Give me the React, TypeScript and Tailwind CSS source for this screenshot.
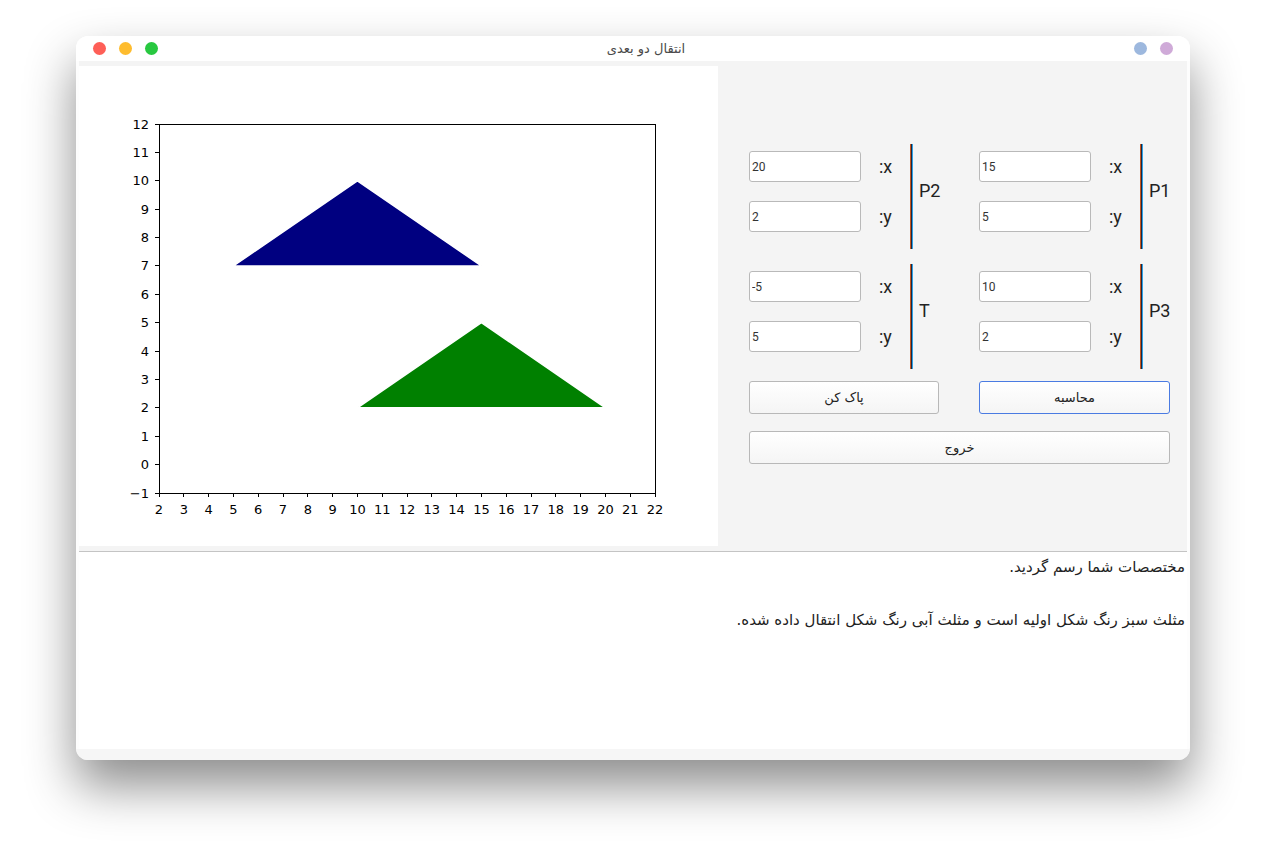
// Two-dimensional translation window (انتقال دو بعدی)
const FA = { fontFamily: '"DejaVu Sans", "Noto Sans", sans-serif' };
const RB = { fontFamily: 'Roboto, "Noto Sans", sans-serif' };

const px = (v: number) => 80 + (v - 2) * 24.8;
const py = (v: number) => 427 - (v + 1) * (369 / 13);

const xTicks = Array.from({ length: 21 }, (_, i) => i + 2);
const yTicks = Array.from({ length: 14 }, (_, i) => i - 1);

const tri = (pts: [number, number][]) => pts.map(([x, y]) => `${px(x)},${py(y)}`).join(' ');

const Chart = () => (
  <svg width="639" height="480" viewBox="0 0 639 480" className="block">
    <polygon points={tri([[5, 7], [10, 10], [15, 7]])} fill="#000080" stroke="#ffffff" strokeWidth="1.5" />
    <polygon points={tri([[10, 2], [15, 5], [20, 2]])} fill="#008000" stroke="#ffffff" strokeWidth="1.5" />
    <rect x="80" y="58" width="496" height="369" fill="none" stroke="#000" strokeWidth="1" shapeRendering="crispEdges" />
    {xTicks.map((v) => (
      <g key={`x${v}`}>
        <line x1={px(v)} x2={px(v)} y1="427" y2="431" stroke="#000" strokeWidth="1" shapeRendering="crispEdges" />
        <text x={px(v)} y="443" textAnchor="middle" dominantBaseline="central" fontSize="13" fill="#000" style={{ fontFamily: '"DejaVu Sans", sans-serif' }}>
          {v}
        </text>
      </g>
    ))}
    {yTicks.map((v) => (
      <g key={`y${v}`}>
        <line x1="76" x2="80" y1={py(v)} y2={py(v)} stroke="#000" strokeWidth="1" shapeRendering="crispEdges" />
        <text x="70" y={py(v)} textAnchor="end" dominantBaseline="central" fontSize="13" fill="#000" style={{ fontFamily: '"DejaVu Sans", sans-serif' }}>
          {v < 0 ? `\u2212${-v}` : v}
        </text>
      </g>
    ))}
  </svg>
);

const Field = ({ value }: { value: string }) => (
  <input
    readOnly
    defaultValue={value}
    style={RB}
    className="h-[31px] w-[112px] rounded-[3px] border border-[#b9b9b9] bg-white px-[2px] text-[12px] text-[#333] outline-none"
  />
);

const Point = ({ name, x, y }: { name: string; x: string; y: string }) => (
  <div className="flex h-[105px]" style={RB}>
    <div className="flex w-[112px] flex-col gap-[19px] pt-[7px]">
      <Field value={x} />
      <Field value={y} />
    </div>
    <div className="ml-[18px] flex w-[16px] flex-col gap-[19px] pt-[7px] text-[18px] text-[#222]">
      <div className="flex h-[31px] items-center">:x</div>
      <div className="flex h-[31px] items-center">:y</div>
    </div>
    <div className="ml-[15px] flex h-full">
      <div className="w-px bg-[#c8581e]" />
      <div className="w-px bg-[#1c2540]" />
      <div className="w-px bg-[#2ea3e6]" />
    </div>
    <div className="ml-[6px] self-center -translate-y-[6px] text-[18px] text-[#222]">{name}</div>
  </div>
);

const Btn = ({ label, width, primary }: { label: string; width: string; primary?: boolean }) => (
  <button
    style={FA}
    className={`${width} h-[33px] rounded-[3px] border bg-gradient-to-b from-white to-[#f5f5f5] text-[13px] text-[#222] ${
      primary ? 'border-[#4a7be2]' : 'border-[#b8b8b8]'
    }`}
  >
    {label}
  </button>
);

const App = () => {
  return (
    <div className="h-[847px] w-[1266px] bg-white pl-[76px] pt-[36px]">
      <div className="flex h-[724px] w-[1114px] flex-col overflow-hidden rounded-[12px] bg-[#fdfdfd] shadow-[0_26px_50px_rgba(0,0,0,0.45)]">
        {/* title bar */}
        <div className="flex h-[25px] items-center bg-white px-[17px]">
          <div className="flex gap-[13px]">
            <span className="h-[13px] w-[13px] rounded-full bg-[#fe5f57]" />
            <span className="h-[13px] w-[13px] rounded-full bg-[#febc2e]" />
            <span className="h-[13px] w-[13px] rounded-full bg-[#28c840]" />
          </div>
          <div className="flex-1 text-center text-[13px] text-[#4a4a4a]" style={FA} dir="rtl">
            انتقال دو بعدی
          </div>
          <div className="flex gap-[13px]">
            <span className="h-[13px] w-[13px] rounded-full bg-[#9db8de]" />
            <span className="h-[13px] w-[13px] rounded-full bg-[#cfaad8]" />
          </div>
        </div>

        {/* top section: chart + form */}
        <div className="mx-[3px] flex h-[490px] bg-[#f4f4f4] py-[5px]">
          <div className="h-[480px] w-[639px] bg-white">
            <Chart />
          </div>
          <div className="flex-1 pl-[31px] pt-[78px]">
            <div className="grid grid-cols-[230px_1fr]">
              <Point name="P2" x="20" y="2" />
              <Point name="P1" x="15" y="5" />
            </div>
            <div className="mt-[15px] grid grid-cols-[230px_1fr]">
              <Point name="T" x="-5" y="5" />
              <Point name="P3" x="10" y="2" />
            </div>
            <div className="mt-[12px] flex gap-[40px]">
              <Btn label="پاک کن" width="w-[190px]" />
              <Btn label="محاسبه" width="w-[191px]" primary />
            </div>
            <div className="mt-[17px]">
              <Btn label="خروج" width="w-[421px]" />
            </div>
          </div>
        </div>

        <div className="mx-[3px] h-px bg-[#c4c4c4]" />

        {/* output text */}
        <div className="mx-[3px] h-[197px] bg-white pr-[2px] pt-[5px] text-[15px] leading-[20px] text-[#222]" dir="rtl" style={FA}>
          <p>مختصصات شما رسم گردید.</p>
          <p className="mt-[33px]">مثلث سبز رنگ شکل اولیه است و مثلث آبی رنگ شکل انتقال داده شده.</p>
        </div>

        <div className="flex-1 bg-[#f6f6f6]" />
      </div>
    </div>
  );
};

export default App;
